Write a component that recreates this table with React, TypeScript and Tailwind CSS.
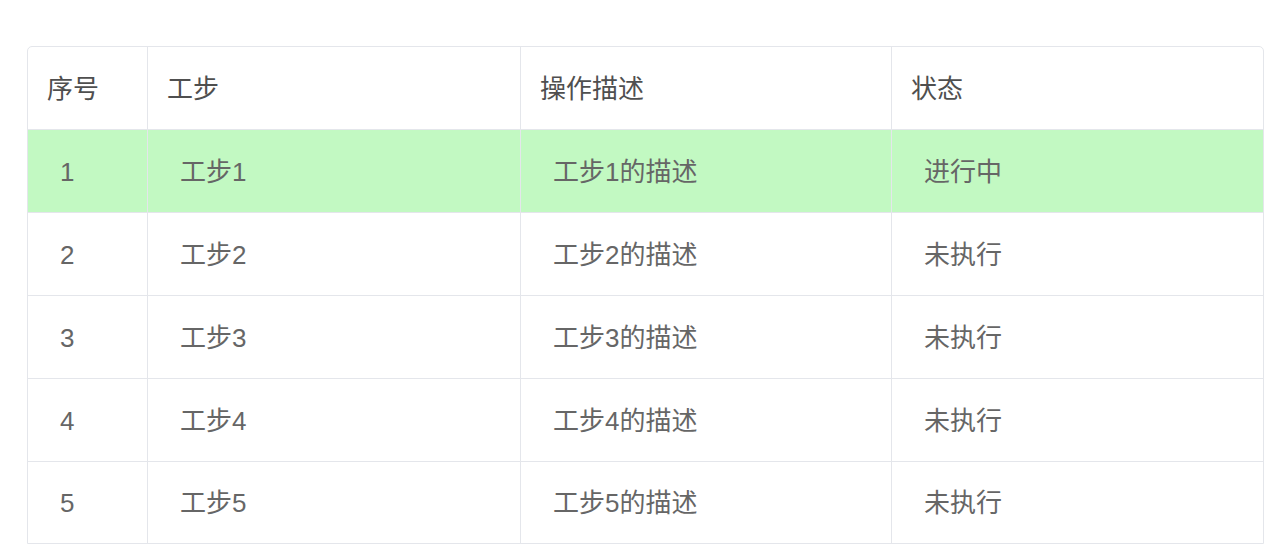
const rows = [
  { no: 1, step: "工步1", desc: "工步1的描述", status: "进行中", active: true },
  { no: 2, step: "工步2", desc: "工步2的描述", status: "未执行", active: false },
  { no: 3, step: "工步3", desc: "工步3的描述", status: "未执行", active: false },
  { no: 4, step: "工步4", desc: "工步4的描述", status: "未执行", active: false },
  { no: 5, step: "工步5", desc: "工步5的描述", status: "未执行", active: false },
];

const cols = "grid grid-cols-[120px_373px_371px_1fr]";

const App = () => {
  return (
    <div
      className="min-h-[554px] bg-white pt-[46px] pl-[27px] pr-[16px]"
      style={{ fontFamily: '"Liberation Sans", "Noto Sans CJK SC", sans-serif' }}
    >
      <div className="rounded-t-[5px] border border-[#e4e6eb] overflow-hidden text-[26px]">
        <div className={`${cols} h-[83px] border-b border-[#e4e6eb] text-[#4f4f4f]`}>
          <div className="flex items-center pt-[2px] pl-[19px] border-r border-[#e4e6eb]">序号</div>
          <div className="flex items-center pt-[2px] pl-[19px] border-r border-[#e4e6eb]">工步</div>
          <div className="flex items-center pt-[2px] pl-[19px] border-r border-[#e4e6eb]">操作描述</div>
          <div className="flex items-center pt-[2px] pl-[19px]">状态</div>
        </div>
        {rows.map((r, i) => (
          <div
            key={r.no}
            className={`${cols} ${i < rows.length - 1 ? "h-[83px] border-b border-[#e4e6eb]" : "h-[81px]"} ${
              r.active ? "bg-[#c2f9c2]" : "bg-white"
            } text-[#666666]`}
          >
            <div className="flex items-center pt-[2px] pl-[32px] border-r border-[#e4e6eb]">{r.no}</div>
            <div className="flex items-center pt-[2px] pl-[32px] border-r border-[#e4e6eb]">{r.step}</div>
            <div className="flex items-center pt-[2px] pl-[32px] border-r border-[#e4e6eb]">{r.desc}</div>
            <div className="flex items-center pt-[2px] pl-[32px]">{r.status}</div>
          </div>
        ))}
      </div>
    </div>
  );
};

export default App;
